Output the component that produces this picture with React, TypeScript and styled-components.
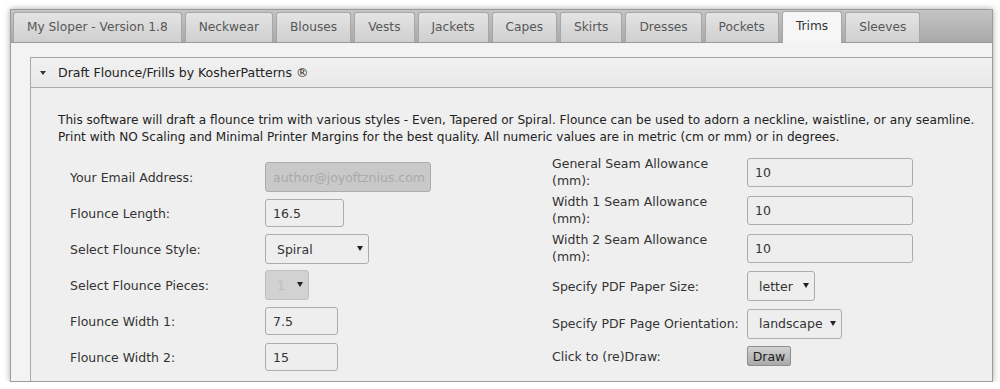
import React from 'react';
import styled, { createGlobalStyle, css } from 'styled-components';

const tabs = [
  'My Sloper - Version 1.8',
  'Neckwear',
  'Blouses',
  'Vests',
  'Jackets',
  'Capes',
  'Skirts',
  'Dresses',
  'Pockets',
  'Trims',
  'Sleeves',
];

const App: React.FC = () => {
  return (
    <Page>
      <GlobalStyle />
      <Frame>
        <TabBar>
          {tabs.map((t) => (
            <Tab key={t} $active={t === 'Trims'}>
              {t}
            </Tab>
          ))}
        </TabBar>

        <Content>
          <Accordion>
            <AccordionHeader>
              <Caret />
              <HeaderTitle>Draft Flounce/Frills by KosherPatterns ®</HeaderTitle>
            </AccordionHeader>

            <Panel>
              <Intro>
                <IntroLine>
                  This software will draft a flounce trim with various styles - Even, Tapered or Spiral. Flounce can be
                  used to adorn a neckline, waistline, or any seamline.
                </IntroLine>
                <IntroLine>
                  Print with NO Scaling and Minimal Printer Margins for the best quality. All numeric values are in
                  metric (cm or mm) or in degrees.
                </IntroLine>
              </Intro>

              <Form>
                <Column $offset={6}>
                  <Row $height={36}>
                    <Label>Your Email Address:</Label>
                    <TextInput $width={166} $height={30} disabled defaultValue="author@joyoftznius.com" />
                  </Row>
                  <Row $height={36}>
                    <Label>Flounce Length:</Label>
                    <TextInput $width={79} $height={28} defaultValue="16.5" />
                  </Row>
                  <Row $height={36}>
                    <Label>Select Flounce Style:</Label>
                    <SelectWrap $width={104}>
                      <Select defaultValue="Spiral">
                        <option>Even</option>
                        <option>Tapered</option>
                        <option>Spiral</option>
                      </Select>
                    </SelectWrap>
                  </Row>
                  <Row $height={36}>
                    <Label>Select Flounce Pieces:</Label>
                    <SelectWrap $width={44} $disabled>
                      <Select disabled defaultValue="1">
                        <option>1</option>
                      </Select>
                    </SelectWrap>
                  </Row>
                  <Row $height={36}>
                    <Label>Flounce Width 1:</Label>
                    <TextInput $width={73} $height={28} defaultValue="7.5" />
                  </Row>
                  <Row $height={36}>
                    <Label>Flounce Width 2:</Label>
                    <TextInput $width={73} $height={28} defaultValue="15" />
                  </Row>
                </Column>

                <Column $offset={0}>
                  <Row $height={38}>
                    <Label>
                      General Seam Allowance
                      <br />
                      (mm):
                    </Label>
                    <TextInput $width={166} $height={29} defaultValue="10" />
                  </Row>
                  <Row $height={38}>
                    <Label>
                      Width 1 Seam Allowance
                      <br />
                      (mm):
                    </Label>
                    <TextInput $width={166} $height={29} defaultValue="10" />
                  </Row>
                  <Row $height={38}>
                    <Label>
                      Width 2 Seam Allowance
                      <br />
                      (mm):
                    </Label>
                    <TextInput $width={166} $height={29} defaultValue="10" />
                  </Row>
                  <Row $height={38}>
                    <Label>Specify PDF Paper Size:</Label>
                    <SelectWrap $width={68}>
                      <Select defaultValue="letter">
                        <option>letter</option>
                        <option>A4</option>
                      </Select>
                    </SelectWrap>
                  </Row>
                  <Row $height={37}>
                    <Label>Specify PDF Page Orientation:</Label>
                    <SelectWrap $width={95}>
                      <Select defaultValue="landscape">
                        <option>landscape</option>
                        <option>portrait</option>
                      </Select>
                    </SelectWrap>
                  </Row>
                  <Row $height={28}>
                    <Label>Click to (re)Draw:</Label>
                    <DrawButton>Draw</DrawButton>
                  </Row>
                </Column>
              </Form>
            </Panel>
          </Accordion>
        </Content>
      </Frame>
    </Page>
  );
};

export default App;

const GlobalStyle = createGlobalStyle`
  html, body {
    margin: 0;
    padding: 0;
    background: #ffffff;
  }
  body {
    font-family: "DejaVu Sans", Verdana, sans-serif;
    font-size: 12.5px;
    color: #333;
  }
`;

const Page = styled.div`
  padding: 9px 7px 0 10px;
`;

const Frame = styled.div`
  width: 981px;
  height: 371px;
  border: 1px solid #9c9c9c;
  background: #f3f3f3;
  box-shadow: 0 0 6px rgba(0, 0, 0, 0.35);
  overflow: hidden;
`;

const TabBar = styled.div`
  display: flex;
  align-items: flex-end;
  gap: 3px;
  height: 33px;
  padding: 0 2px;
  box-sizing: border-box;
  background: linear-gradient(#c4c4c4, #a9a9a9);
  border-bottom: 1px solid #9a9a9a;
`;

const Tab = styled.div<{ $active?: boolean }>`
  height: 29px;
  line-height: 29px;
  padding: 0 13px;
  border: 1px solid #a7a7a7;
  border-bottom: none;
  border-radius: 3px 3px 0 0;
  background: linear-gradient(#e4e4e4, #cfcfcf);
  color: #575757;
  font-size: 12.2px;
  white-space: nowrap;

  ${(p) =>
    p.$active &&
    css`
      height: 31px;
      margin-bottom: -1px;
      background: #f6f6f6;
      color: #333;
    `}
`;

const Content = styled.div`
  padding: 14px 0 0 19px;
`;

const Accordion = styled.div`
  border: 1px solid #a9a9a9;
  border-right: none;
  height: 400px;
`;

const AccordionHeader = styled.div`
  display: flex;
  align-items: center;
  height: 29px;
  padding-left: 9px;
  background: linear-gradient(#f1f1f1, #e9e9e9);
  border-bottom: 1px solid #a9a9a9;
`;

const Caret = styled.span`
  width: 0;
  height: 0;
  border-left: 3px solid transparent;
  border-right: 3px solid transparent;
  border-top: 4px solid #333;
  margin-right: 12px;
`;

const HeaderTitle = styled.span`
  color: #222;
`;

const Panel = styled.div`
  background: #efefef;
  padding: 24px 0 0 27px;
  height: 100%;
`;

const Intro = styled.div`
  color: #222;
  font-size: 12.1px;
  line-height: 17px;
`;

const IntroLine = styled.div`
  white-space: nowrap;
`;

const Form = styled.div`
  display: grid;
  grid-template-columns: 482px 482px;
  margin-top: 7px;
  padding-left: 12px;
`;

const Column = styled.div<{ $offset: number }>`
  display: flex;
  flex-direction: column;
  padding-top: ${(p) => p.$offset}px;
`;

const Row = styled.div<{ $height: number }>`
  display: flex;
  align-items: center;
  height: ${(p) => p.$height}px;
`;

const Label = styled.div`
  width: 195px;
  flex-shrink: 0;
  line-height: 17px;
  color: #333;
`;

const fieldBase = css`
  box-sizing: border-box;
  border: 1px solid #acacac;
  border-radius: 3px;
  background: #eeeeee;
  font-family: "DejaVu Sans", Verdana, sans-serif;
  font-size: 12.5px;
  color: #333;
  outline: none;
`;

const TextInput = styled.input<{ $width: number; $height: number }>`
  ${fieldBase}
  width: ${(p) => p.$width}px;
  height: ${(p) => p.$height}px;
  padding: 0 0 0 7px;

  &:disabled {
    background: #c9c9c9;
    color: #a9a9a9;
  }
`;

const SelectWrap = styled.div<{ $width: number; $disabled?: boolean }>`
  position: relative;
  width: ${(p) => p.$width}px;
  height: 30px;

  &::after {
    content: '';
    position: absolute;
    right: 6px;
    top: 12px;
    border-left: 3px solid transparent;
    border-right: 3px solid transparent;
    border-top: 5px solid #222;
  }

  select {
    background: ${(p) => (p.$disabled ? '#c6c6c6' : '#eeeeee')};
    color: ${(p) => (p.$disabled ? '#aaaaaa' : '#333')};
  }
`;

const Select = styled.select`
  ${fieldBase}
  appearance: none;
  width: 100%;
  height: 100%;
  padding: 0 0 0 11px;
`;

const DrawButton = styled.button`
  box-sizing: border-box;
  width: 44px;
  height: 20px;
  padding: 0;
  border: 1px solid #8e8e8e;
  border-radius: 2px;
  background: linear-gradient(#d2d2d2, #a9a9a9);
  font-family: "DejaVu Sans", Verdana, sans-serif;
  font-size: 12.5px;
  color: #222;
`;
